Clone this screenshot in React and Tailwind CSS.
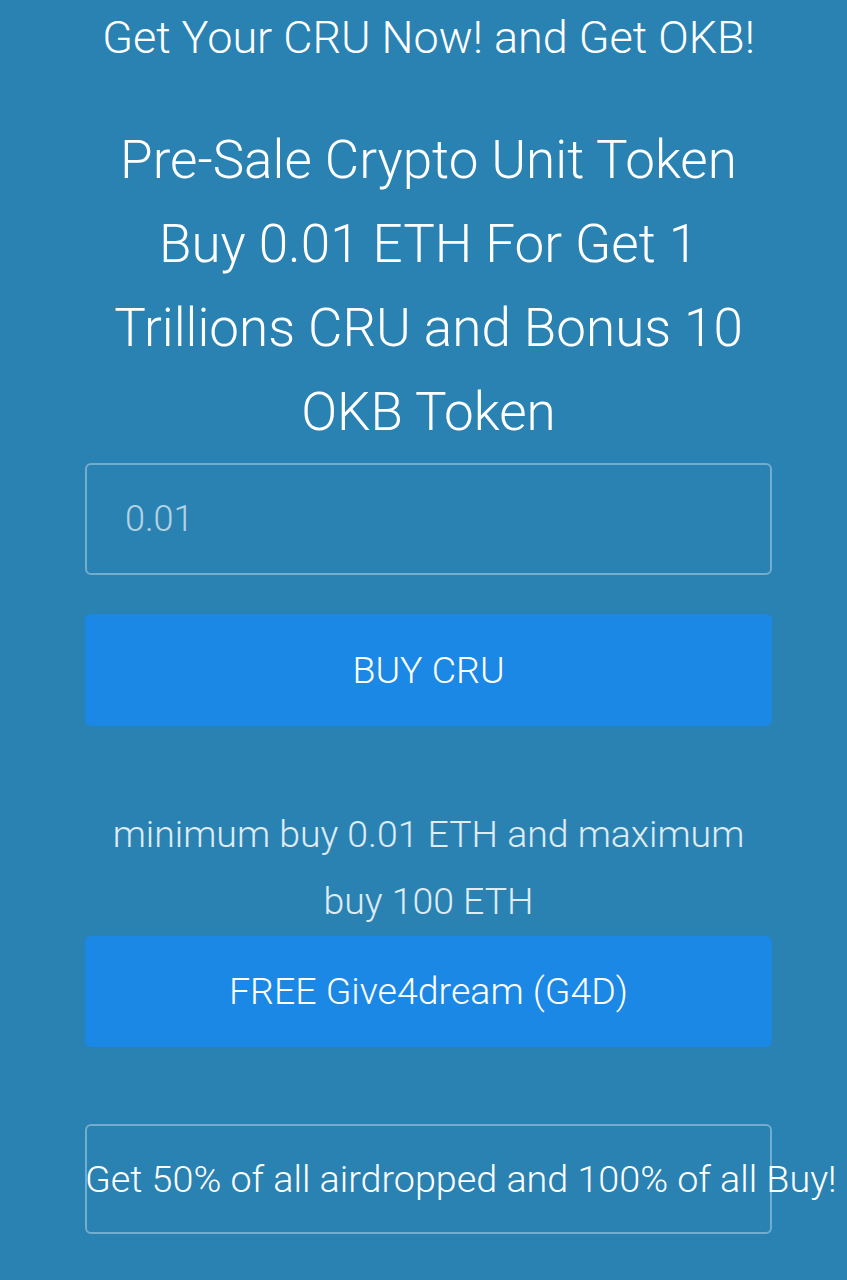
export default function App() {
  return (
    <div className="min-h-[1280px] w-full bg-[#2982b2] font-['Roboto','Liberation_Sans',sans-serif] font-light text-white overflow-hidden">
      <div className="ml-[85px] w-[687px] flex flex-col">
        <h2 className="pt-[10px] text-center text-[45px] leading-[56px] font-light whitespace-nowrap">
          Get Your CRU Now! and Get OKB!
        </h2>

        <h1 className="mt-[52px] text-center text-[53px] leading-[84px] font-light">
          Pre-Sale Crypto Unit Token Buy 0.01 ETH For Get 1 Trillions CRU and Bonus 10 OKB Token
        </h1>

        <input
          type="text"
          placeholder="0.01"
          className="mt-[9px] h-[112px] w-full rounded-[6px] border-2 border-white/35 bg-transparent px-[38px] text-[36px] font-light text-white placeholder:text-white/65 outline-none"
        />

        <button className="mt-[39px] h-[112px] w-full rounded-[6px] bg-[#1b88e6] text-[37.5px] font-light text-white">
          BUY CRU
        </button>

        <p className="mt-[75px] text-center text-[37.4px] leading-[67px] font-light text-white/85">
          minimum buy 0.01 ETH and maximum buy 100 ETH
        </p>

        <button className="mt-[1px] h-[111px] w-full rounded-[6px] bg-[#1b88e6] text-[37.5px] font-light text-white">
          FREE Give4dream (G4D)
        </button>

        <div className="mt-[77px] flex h-[110px] w-full items-center rounded-[6px] border-2 border-white/35">
          <span className="-ml-[2px] whitespace-nowrap text-[37.7px] font-light">
            Get 50% of all airdropped and 100% of all Buy!
          </span>
        </div>
      </div>
    </div>
  )
}
